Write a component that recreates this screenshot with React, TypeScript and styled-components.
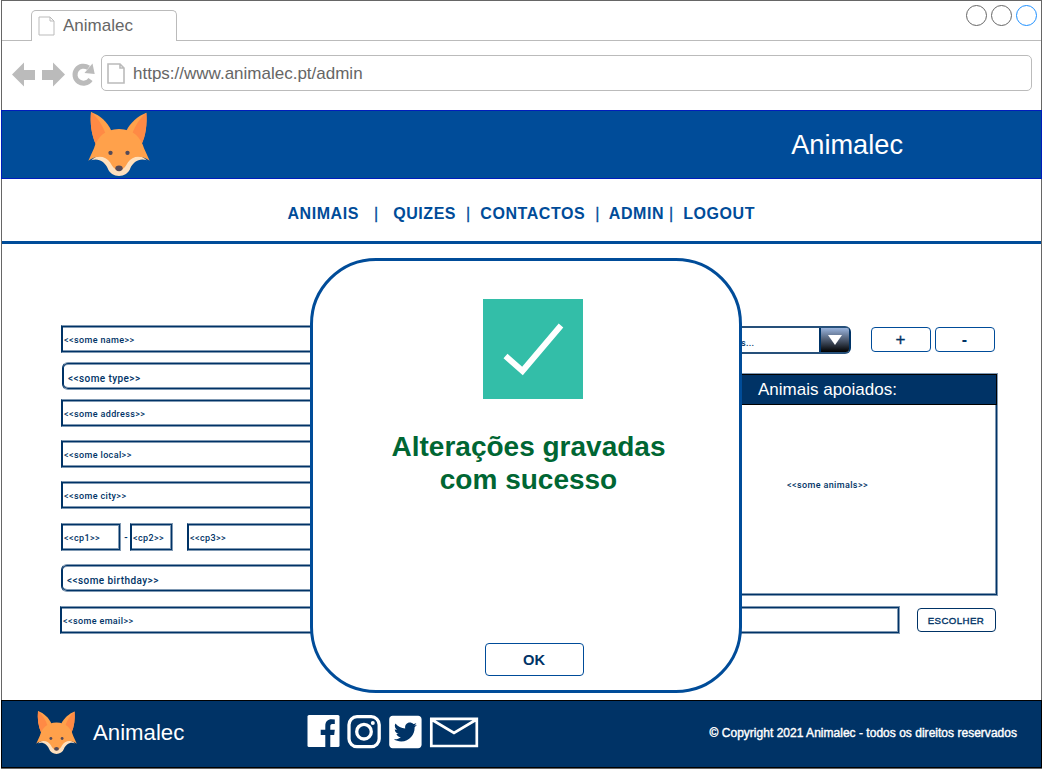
import React from "react";
import styled, { createGlobalStyle, css } from "styled-components";
import { FaTwitterSquare } from "react-icons/fa";

const BLUE = "#004c99";
const NAVY = "#003366";
const SOFT = "#8099b3";
const SANS = '"Liberation Sans", Arial, Helvetica, sans-serif';
const FIELD = "Roboto, sans-serif";

const GlobalStyle = createGlobalStyle`
  *, *::before, *::after { box-sizing: border-box; }
  body { margin: 0; background: #fff; font-family: ${SANS}; overflow: hidden; }
`;

/* A navy outline with softened lines on the top, right and bottom sides. */
const softOutline = css`
  border: 1px solid ${SOFT};
  border-left-color: ${NAVY};
  box-shadow:
    inset 0 0 0 1px ${NAVY},
    inset 0 2px ${SOFT},
    inset 0 -2px ${SOFT},
    inset -2px 0 ${SOFT};
`;

const Browser = styled.div`
  position: relative;
  display: flex;
  flex-direction: column;
  width: 1041px;
  height: 769px;
  margin-left: 1px;
  border: 1px solid #666;
`;

const TabStrip = styled.div`
  display: flex;
  align-items: flex-end;
  justify-content: space-between;
  height: 40px;
  padding-left: 29px;
  box-shadow: inset 0 -1px #bbb;
`;

const Tab = styled.div`
  display: flex;
  align-items: center;
  gap: 8px;
  width: 146px;
  height: 31px;
  padding: 0 6px 0 6px;
  border: 1px solid #bbb;
  border-bottom: 0;
  border-radius: 5px 5px 0 0;
  background: #fff;
  color: #666;
  font-size: 17px;
`;

const WindowControls = styled.div`
  display: flex;
  gap: 4px;
  align-self: flex-start;
  padding: 4px 4px 0 0;
`;

const Control = styled.span<{ $active?: boolean }>`
  width: 21px;
  height: 21px;
  border: 1px solid ${(p) => (p.$active ? "#1e90ff" : "#666")};
  border-radius: 50%;
`;

const Toolbar = styled.div`
  display: flex;
  align-items: flex-start;
  height: 69px;
  padding: 14px 9px 0 10px;
`;

const NavIcons = styled.svg`
  display: block;
  width: 89px;
  height: 36px;
`;

const Address = styled.div`
  display: flex;
  flex: 1;
  align-items: center;
  gap: 8px;
  height: 36px;
  padding: 2px 0 0 5px;
  border: 1px solid #bbb;
  border-radius: 5px;
  color: #666;
  font-size: 17px;
`;

const Header = styled.header`
  display: flex;
  align-items: center;
  justify-content: space-between;
  height: 69px;
  margin: 0 -1px;
  padding: 0 138px 0 86px;
  border: 1px solid #001dbc;
  background: ${BLUE};
`;

const Brand = styled.span<{ $size: number }>`
  padding-top: 1px;
  color: #fff;
  font-size: ${(p) => p.$size}px;
  line-height: 1;
`;

const Nav = styled.nav`
  height: 65px;
  padding: 26px 0 0 285.5px;
  border-bottom: 3px solid ${BLUE};
  color: ${BLUE};
  font-size: 16px;
  font-weight: bold;
  letter-spacing: 0.56px;
  line-height: 18px;
  white-space: pre;
`;

const Separator = styled.span`
  font-weight: normal;
  letter-spacing: 0;
  -webkit-text-stroke: 0.3px ${BLUE};
`;

const Main = styled.main`
  height: 457px;
  padding: 81px 44px 0 58px;
`;

const Columns = styled.div`
  display: flex;
  justify-content: space-between;
  height: 281px;
`;

const Form = styled.div`
  display: flex;
  flex-direction: column;
  width: 340px;
  padding-left: 1px;
`;

const Row = styled.div<{ $top?: number; $indent?: number }>`
  display: flex;
  align-items: center;
  margin-top: ${(p) => p.$top ?? 0}px;
  margin-left: ${(p) => p.$indent ?? 0}px;
`;

const Input = styled.div<{ $w?: number; $rounded?: boolean }>`
  ${softOutline}
  display: flex;
  flex: ${(p) => (p.$w ? `0 0 ${p.$w}px` : "1")};
  align-items: center;
  height: 28px;
  padding: ${(p) => (p.$rounded ? "5px 0 0 5px" : "2px 0 0 2px")};
  border-radius: ${(p) => (p.$rounded ? 6 : 0)}px;
  color: ${NAVY};
  font-family: ${FIELD};
  font-size: ${(p) => (p.$rounded ? 10 : 9)}px;
  font-weight: 500;
  letter-spacing: ${(p) => (p.$rounded ? 0.42 : 0.38)}px;
  white-space: nowrap;
  overflow: hidden;
`;

const Dash = styled.span<{ $w: number }>`
  width: ${(p) => p.$w}px;
  padding: 1px 0 0 1px;
  color: ${NAVY};
  font: 500 10px ${FIELD};
  text-align: center;
`;

const Side = styled.div`
  display: flex;
  flex-direction: column;
  width: 298px;
  margin-right: -1px;
`;

const Picker = styled.div`
  display: flex;
  align-items: center;
  height: 28px;
  margin-top: 1px;
`;

const Select = styled.div`
  display: flex;
  align-items: stretch;
  justify-content: space-between;
  width: 151px;
  height: 28px;
  margin-right: 20px;
  border: 2px solid ${NAVY};
  border-top-color: #26507a;
  border-bottom-color: #26507a;
  border-radius: 6px;
  color: ${NAVY};
  font: 500 9px/31px ${FIELD};
  letter-spacing: 0.3px;
`;

const SelectText = styled.span`
  padding-left: 9px;
`;

const SelectArrow = styled.span`
  display: flex;
  align-items: center;
  justify-content: center;
  width: 30px;
  border-left: 2px solid ${NAVY};
  border-radius: 0 3px 3px 0;
  background: linear-gradient(#99b3dd, #000);
`;

const Button = styled.button<{
  $w: number;
  $h: number;
  $size: number;
  $dark?: boolean;
  $light?: boolean;
}>`
  display: flex;
  align-items: center;
  justify-content: center;
  width: ${(p) => p.$w}px;
  height: ${(p) => p.$h}px;
  padding: 1px 1px 0 0;
  border: 1px solid ${(p) => (p.$dark ? NAVY : BLUE)};
  border-radius: 4px;
  background: #fff;
  color: ${NAVY};
  font: ${(p) => (p.$light ? "normal" : "bold")} ${(p) => p.$size}px ${SANS};
  letter-spacing: ${(p) => (p.$dark ? 0.4 : 0)}px;
  -webkit-text-stroke: ${(p) => (p.$light ? 0.35 : 0)}px ${NAVY};
`;

const ButtonGap = styled.div`
  display: flex;
  gap: 4px;
`;

const Panel = styled.section`
  ${softOutline}
  height: 223px;
  margin-top: 19px;
`;

const PanelTitle = styled.h2`
  height: 31px;
  margin: 0;
  padding-left: 56px;
  border: 1px solid #000;
  background: ${NAVY};
  color: #fff;
  font-size: 17px;
  font-weight: normal;
  line-height: 30px;
`;

const PanelText = styled.p`
  margin: 74px 0 0 86px;
  color: ${NAVY};
  font: 500 9px/12px ${FIELD};
  letter-spacing: 0.38px;
`;

const EmailRow = styled.div`
  display: flex;
  align-items: center;
  justify-content: space-between;
  padding-right: 1px;
`;

const Footer = styled.footer`
  display: flex;
  align-items: center;
  height: 68px;
  margin: 0 -1px;
  padding: 0 24px 0 34px;
  border: 1px solid #000;
  background: ${NAVY};
`;

const Social = styled.svg`
  display: block;
  width: 173px;
  height: 36px;
  margin: 0 0 4px 121px;
`;

const Copyright = styled.span`
  margin: 0 0 3px auto;
  color: #fff;
  font-size: 12px;
  letter-spacing: 0.02px;
  -webkit-text-stroke: 0.4px #fff;
`;

const Modal = styled.div`
  position: absolute;
  top: 257px;
  left: 308px;
  display: flex;
  flex-direction: column;
  align-items: center;
  width: 432px;
  height: 435px;
  padding-top: 38px;
  border: 3px solid ${BLUE};
  border-radius: 66px;
  background: #fff;
`;

const CheckTile = styled.svg`
  display: block;
  width: 100px;
  height: 100px;
  margin-left: 14px;
  background: #33bea8;
`;

const ModalTitle = styled.h1`
  width: 320px;
  margin: 31px 0 147px 5px;
  color: #006633;
  font-size: 28px;
  line-height: 33px;
  text-align: center;
`;

const ModalAction = styled.div`
  margin-left: 17px;
`;

const BrandFooter = styled.div`
  display: flex;
  align-items: center;
  gap: 16px;
  width: 149px;
  padding-bottom: 3px;
`;

const PageIcon = ({ w, h, stroke }: { w: number; h: number; stroke: number }) => (
  <svg width={w} height={h} viewBox={`0 0 ${w} ${h}`} fill="none" stroke="#bbb" strokeWidth={stroke}>
    <path d={`M1 1H${w - 5}L${w - 1} 5V${h - 1}H1ZM${w - 5} 1V5H${w - 1}`} />
  </svg>
);

const Fox = ({ w, h }: { w: number; h: number }) => (
  <svg width={w} height={h} viewBox="54 36 186 192" preserveAspectRatio="none">
    <path d="M63 36C90 46 112 66 124 92L78 134C64 105 60 70 63 36Z" fill="#ffa14b" />
    <path d="M229 38C203 48 181 68 169 92L214 134C228 105 231 70 229 38Z" fill="#ffa14b" />
    <path d="M63 36C60 70 64 105 78 134L107 103C98 76 82 52 63 36Z" fill="#ff8a45" />
    <path d="M229 38C232 70 228 105 214 134L186 103C195 76 211 53 229 38Z" fill="#ff8a45" />
    <path d="M64 181C82 162 110 164 124 188H170C184 164 212 162 230 181C210 172 188 186 181 205C176 220 162 228 147 228C132 228 118 220 113 205C106 186 84 172 64 181Z" fill="#ffe0bd" />
    <path d="M147 87C105 87 81 112 72 145L55 182C80 164 108 168 120 187C126 197 131 208 147 212C163 208 168 197 174 187C186 168 214 164 239 182L222 145C213 112 189 87 147 87Z" fill="#ffa14b" />
    <circle cx="121.500" cy="158.500" r="6.500" fill="#544a58" />
    <circle cx="172.500" cy="158.500" r="6.500" fill="#544a58" />
    <ellipse cx="147" cy="205" rx="11" ry="8.500" fill="#544a58" />
  </svg>
);

export default function App() {
  return (
    <>
      <GlobalStyle />
      <Browser>
        <TabStrip>
          <Tab>
            <PageIcon w={17} h={20} stroke={1} />
            Animalec
          </Tab>
          <WindowControls>
            <Control />
            <Control />
            <Control $active />
          </WindowControls>
        </TabStrip>
        <Toolbar>
          <NavIcons viewBox="12 55 89 36">
            <path d="M12 74.500L24 62.500V70H35V80H24V86.500ZM65 74.500L53 62.500V70H42V80H53V86.500Z" fill="#bbb" />
            <path d="M90.500 79.500A8.500 8.500 0 1 1 88.500 67.800" fill="none" stroke="#bbb" strokeWidth="5" />
            <path d="M92.500 63.500L94.700 74L84.500 73Z" fill="#bbb" />
          </NavIcons>
          <Address>
            <PageIcon w={18} h={21} stroke={1.6} />
            https://www.animalec.pt/admin
          </Address>
        </Toolbar>
        <Header>
          <Fox w={62} h={64} />
          <Brand $size={27.2}>Animalec</Brand>
        </Header>
        <Nav>
          {"ANIMAIS   "}<Separator>|</Separator>
          {"   QUIZES  "}<Separator>|</Separator>
          {"  CONTACTOS  "}<Separator>|</Separator>
          {"  ADMIN "}<Separator>|</Separator>
          {"  LOGOUT"}
        </Nav>
        <Main>
          <Columns>
            <Form>
              <Row><Input>{"<<some name>>"}</Input></Row>
              <Row $top={9} $indent={1}><Input $rounded>{"<<some type>>"}</Input></Row>
              <Row $top={9}><Input>{"<<some address>>"}</Input></Row>
              <Row $top={13}><Input>{"<<some local>>"}</Input></Row>
              <Row $top={13}><Input>{"<<some city>>"}</Input></Row>
              <Row $top={14}>
                <Input $w={60}>{"<<cp1>>"}</Input>
                <Dash $w={9}>-</Dash>
                <Input $w={43}>{"<cp2>>"}</Input>
                <Dash $w={14} />
                <Input>{"<<cp3>>"}</Input>
              </Row>
              <Row $top={13}><Input $rounded>{"<<some birthday>>"}</Input></Row>
            </Form>
            <Side>
              <Picker>
                <Select>
                  <SelectText>Animais...</SelectText>
                  <SelectArrow>
                    <svg width="14" height="10" viewBox="0 0 14 10"><path d="M0 0H14L7 10Z" fill="#fff" /></svg>
                  </SelectArrow>
                </Select>
                <ButtonGap>
                  <Button $w={60} $h={25} $size={17} $light>+</Button>
                  <Button $w={60} $h={25} $size={16}>-</Button>
                </ButtonGap>
              </Picker>
              <Panel>
                <PanelTitle>Animais apoiados:</PanelTitle>
                <PanelText>{"<<some animals>>"}</PanelText>
              </Panel>
            </Side>
          </Columns>
          <EmailRow>
            <Input $w={840}>{"<<some email>>"}</Input>
            <Button $w={79} $h={24} $size={9.7} $dark $light>ESCOLHER</Button>
          </EmailRow>
        </Main>
        <Footer>
          <BrandFooter>
            <Fox w={41} h={43} />
            <Brand $size={22.2}>Animalec</Brand>
          </BrandFooter>
          <Social viewBox="306 714 173 36">
            <rect x="307.500" y="715" width="32" height="32" rx="1.500" fill="#fff" />
            <path d="M325.300 747V735H320.700V729.800H325.300V726C325.300 721.500 327.800 719.300 331.500 719.300L334.800 719.500V724H332.300C330.700 724 330.300 725 330.300 726.300V729.800H334.800L334.200 735H330.300V747Z" fill={NAVY} />
            <g fill="none" stroke="#fff" strokeWidth="3.300">
              <rect x="349" y="716.700" width="30.200" height="30" rx="8" />
              <circle cx="364" cy="731.700" r="7.300" />
            </g>
            <circle cx="372.800" cy="722.900" r="2" fill="#fff" />
            <FaTwitterSquare x={386.9} y={713.5} size={37} color="#fff" />
            <path d="M431.300 718.800H476.800V746H431.300ZM431.500 719.500L454 733L476.500 719.500" fill="none" stroke="#fff" strokeWidth="2.700" />
          </Social>
          <Copyright>© Copyright 2021 Animalec - todos os direitos reservados</Copyright>
        </Footer>
        <Modal>
          <CheckTile viewBox="0 0 100 100">
            <path d="M22.500 57L39.500 72L78 26.500" fill="none" stroke="#fff" strokeWidth="6" />
          </CheckTile>
          <ModalTitle>
            Alterações gravadas
            <br />
            com sucesso
          </ModalTitle>
          <ModalAction>
            <Button $w={99} $h={33} $size={14.7}>OK</Button>
          </ModalAction>
        </Modal>
      </Browser>
    </>
  );
}
